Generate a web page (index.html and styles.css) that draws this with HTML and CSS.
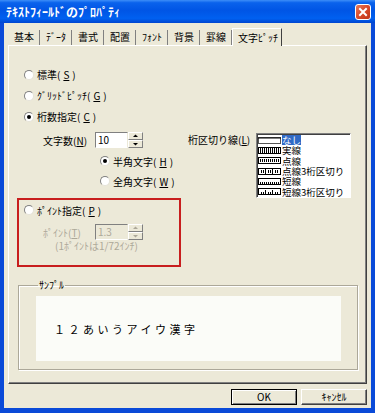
FILE: index.html
```html
<!DOCTYPE html>
<html lang="ja">
<head>
    <meta charset="UTF-8">
    <title>ﾃｷｽﾄﾌｨｰﾙﾄﾞのﾌﾟﾛﾊﾟﾃｨ</title>
    <link rel="stylesheet" href="styles.css">
</head>
<body>
    <div class="window">
        <div class="titlebar">
            <span class="title">ﾃｷｽﾄﾌｨｰﾙﾄﾞのﾌﾟﾛﾊﾟﾃｨ</span>
            <span class="close-btn">
                <svg width="14" height="14" viewBox="0 0 14 14">
                    <path d="M4 4 L10 10 M10 4 L4 10" stroke="#fff" stroke-width="2" stroke-linecap="square"></path>
                </svg>
            </span>
        </div>

        <div class="client">
            <div class="tabs">
                <div class="tab">基本</div>
                <div class="tab">ﾃﾞｰﾀ</div>
                <div class="tab">書式</div>
                <div class="tab">配置</div>
                <div class="tab">ﾌｫﾝﾄ</div>
                <div class="tab">背景</div>
                <div class="tab">罫線</div>
                <div class="tab tab-active">文字ﾋﾟｯﾁ</div>
            </div>

            <div class="panel">
                <div class="radio-row"><span class="radio"></span>標準(<u>S</u>)</div>
                <div class="radio-row"><span class="radio"></span>ｸﾞﾘｯﾄﾞﾋﾟｯﾁ(<u>G</u>)</div>
                <div class="radio-row"><span class="radio checked"></span>桁数指定(<u>C</u>)</div>

                <div class="digits">
                    <div class="digits-left">
                        <div class="field-row">
                            <span class="field-label">文字数(<u>N</u>)</span>
                            <div class="spin">
                                <span class="spin-value">10</span>
                                <span class="spin-btns">
                                    <span class="spin-btn"><svg width="13" height="6" viewBox="0 0 13 6"><polygon points="4,4 6.5,1.5 9,4" fill="#000"></polygon></svg></span>
                                    <span class="spin-btn"><svg width="13" height="6" viewBox="0 0 13 6"><polygon points="4,2 6.5,4.5 9,2" fill="#000"></polygon></svg></span>
                                </span>
                            </div>
                        </div>
                        <div class="radio-row sub-row first"><span class="radio checked"></span>半角文字(<u>H</u>)</div>
                        <div class="radio-row sub-row"><span class="radio"></span>全角文字(<u>W</u>)</div>
                    </div>
                    <div class="digits-right">
                        <span class="sep-label">桁区切り線(<u>L</u>)</span>
                        <div class="listbox">
                            <div class="list-item">
                                <svg class="line-icon" width="23" height="7" viewBox="0 0 23 7"><rect x="0.5" y="0.5" width="22" height="6" fill="#fff" stroke="#555"></rect><path d="M0 1h23" stroke="#000"></path></svg>
                                <span class="item-text selected">なし</span>
                            </div>
                            <div class="list-item">
                                <svg class="line-icon" width="23" height="7" viewBox="0 0 23 7"><rect x="0.5" y="0.5" width="22" height="6" fill="#fff" stroke="#000"></rect><path d="M2.5 1v5M4.5 1v5M6.5 1v5M8.5 1v5M10.5 1v5M12.5 1v5M14.5 1v5M16.5 1v5M18.5 1v5M20.5 1v5" stroke="#000"></path></svg>
                                <span class="item-text">実線</span>
                            </div>
                            <div class="list-item">
                                <svg class="line-icon" width="23" height="7" viewBox="0 0 23 7"><rect x="0.5" y="0.5" width="22" height="6" fill="#fff" stroke="#000"></rect><path d="M2.5 2v3M4.5 2v3M6.5 2v3M8.5 2v3M10.5 2v3M12.5 2v3M14.5 2v3M16.5 2v3M18.5 2v3M20.5 2v3" stroke="#000"></path></svg>
                                <span class="item-text">点線</span>
                            </div>
                            <div class="list-item">
                                <svg class="line-icon" width="23" height="7" viewBox="0 0 23 7"><rect x="0.5" y="0.5" width="22" height="6" fill="#fff" stroke="#000"></rect><path d="M3.5 2v3M5.5 2v3M7.5 1v5M10.5 2v3M12.5 2v3M14.5 1v5M17.5 2v3M19.5 2v3" stroke="#000"></path></svg>
                                <span class="item-text">点線3桁区切り</span>
                            </div>
                            <div class="list-item">
                                <svg class="line-icon" width="23" height="7" viewBox="0 0 23 7"><rect x="0.5" y="0.5" width="22" height="6" fill="#fff" stroke="#000"></rect><path d="M2.5 4v2M4.5 4v2M6.5 4v2M8.5 4v2M10.5 4v2M12.5 4v2M14.5 4v2M16.5 4v2M18.5 4v2M20.5 4v2" stroke="#000"></path></svg>
                                <span class="item-text">短線</span>
                            </div>
                            <div class="list-item">
                                <svg class="line-icon" width="23" height="7" viewBox="0 0 23 7"><rect x="0.5" y="0.5" width="22" height="6" fill="#fff" stroke="#000"></rect><path d="M3.5 4v2M5.5 4v2M7.5 2v4M10.5 4v2M12.5 4v2M14.5 2v4M17.5 4v2M19.5 4v2" stroke="#000"></path></svg>
                                <span class="item-text">短線3桁区切り</span>
                            </div>
                        </div>
                    </div>
                </div>

                <div class="point-box">
                    <div class="radio-row point-row"><span class="radio"></span>ﾎﾟｲﾝﾄ指定(<u>P</u>)</div>
                    <div class="field-row point-field disabled">
                        <span class="field-label">ﾎﾟｲﾝﾄ(<u>T</u>)</span>
                        <div class="spin">
                            <span class="spin-value">1.3</span>
                            <span class="spin-btns">
                                <span class="spin-btn"><svg width="13" height="6" viewBox="0 0 13 6"><polygon points="4,4 6.5,1.5 9,4" fill="#aca899"></polygon></svg></span>
                                <span class="spin-btn"><svg width="13" height="6" viewBox="0 0 13 6"><polygon points="4,2 6.5,4.5 9,2" fill="#aca899"></polygon></svg></span>
                            </span>
                        </div>
                    </div>
                    <div class="point-note">(1ﾎﾟｲﾝﾄは1/72ｲﾝﾁ)</div>
                </div>

                <fieldset class="sample">
                    <legend>ｻﾝﾌﾟﾙ</legend>
                    <div class="sample-box">１２あいうアイウ漢字</div>
                </fieldset>
            </div>

            <div class="buttons">
                <button class="btn btn-default">OK</button>
                <button class="btn">ｷｬﾝｾﾙ</button>
            </div>
        </div>
    </div>
</body>
</html>
```

FILE: styles.css
```css
* {
    margin: 0;
    padding: 0;
    box-sizing: border-box;
}

body {
    font-family: "Noto Sans CJK JP", sans-serif;
    font-size: 10px;
    color: #000;
    background-color: #ffffff;
}

.window {
    width: 375px;
    height: 413px;
    display: flex;
    flex-direction: column;
    background-color: #0a4ad8;
}

.titlebar {
    height: 23px;
    display: flex;
    align-items: center;
    justify-content: space-between;
    padding: 0 4px 0 6px;
    background: linear-gradient(to bottom, #3d8ef8 0%, #0a62ec 12%, #0055e5 45%, #0060f0 80%, #0046d0 100%);
}

.title {
    color: #ffffff;
    font-size: 12px;
    font-weight: bold;
    line-height: 14px;
}

.close-btn {
    width: 16px;
    height: 16px;
    display: flex;
    align-items: center;
    justify-content: center;
    border: 1px solid #ffffff;
    border-radius: 3px;
    background: linear-gradient(to bottom right, #e87a5a 0%, #d8492a 50%, #c03518 100%);
}

.client {
    flex: 1;
    margin: 0 4px 5px;
    padding: 0 4px;
    background-color: #ece9d8;
    display: flex;
    flex-direction: column;
}

/* tab strip */
.tabs {
    height: 22px;
    display: flex;
    align-items: flex-end;
}

.tab {
    height: 15px;
    padding: 0 5px 0 6px;
    line-height: 13px;
    border-right: 1px solid #808080;
    white-space: nowrap;
}

.tab-active {
    height: 18px;
    padding: 2px 3px 0 5px;
    margin-bottom: -1px;
    position: relative;
    background-color: #ece9d8;
    border-top: 1px solid #ffffff;
    border-left: 1px solid #ffffff;
    border-right: 1px solid #404040;
}

.panel {
    height: 339px;
    padding: 18px 0 0 8px;
    border: 1px solid;
    border-color: #ffffff #404040 #404040 #ffffff;
    box-shadow: inset -1px -1px 0 #808080;
}

/* radios */
.radio-row {
    height: 21px;
    display: flex;
    align-items: center;
    gap: 3px;
    padding-left: 7px;
    white-space: nowrap;
}

.radio {
    width: 10px;
    height: 10px;
    border-radius: 50%;
    background-color: #ffffff;
    border: 1px solid;
    border-color: #808080 #e4e2d8 #e4e2d8 #808080;
    display: flex;
    align-items: center;
    justify-content: center;
}

.radio.checked::after {
    content: "";
    width: 4px;
    height: 4px;
    border-radius: 50%;
    background-color: #000;
}

.digits {
    display: flex;
    margin-top: 5px;
}

.digits-left {
    width: 171px;
}

.field-row {
    height: 16px;
    display: flex;
    align-items: center;
    padding-left: 26px;
}

.field-label {
    width: 52px;
    white-space: nowrap;
}

.spin {
    display: flex;
    height: 16px;
}

.spin-value {
    width: 33px;
    height: 16px;
    line-height: 14px;
    padding-left: 2px;
    background-color: #ffffff;
    border: 1px solid;
    border-color: #808080 #ece9d8 #ffffff #808080;
}

.spin-btns {
    width: 15px;
    display: flex;
    flex-direction: column;
}

.spin-btn {
    height: 8px;
    display: flex;
    align-items: center;
    justify-content: center;
    background-color: #ece9d8;
    border: 1px solid;
    border-color: #ffffff #808080 #808080 #ffffff;
}

.sub-row {
    height: 20px;
    padding-left: 83px;
}

.sub-row.first {
    margin-top: 3px;
}

.digits-right {
    display: flex;
    align-items: flex-start;
}

.sep-label {
    width: 68px;
    line-height: 16px;
    white-space: nowrap;
}

.listbox {
    width: 95px;
    height: 65px;
    margin-top: 1px;
    padding-top: 1px;
    background-color: #ffffff;
    border: 1px solid;
    border-color: #808080 #ffffff #ffffff #808080;
    box-shadow: inset 1px 1px 0 #404040;
}

.list-item {
    height: 10.3px;
    display: flex;
    align-items: center;
    gap: 1px;
    padding-left: 1px;
    font-size: 9.5px;
    line-height: 10px;
    white-space: nowrap;
}

.line-icon {
    flex-shrink: 0;
}

.item-text.selected {
    background-color: #316ac5;
    color: #ffffff;
}

/* point group highlighted in red */
.point-box {
    width: 164px;
    height: 69px;
    border: 2px solid #c81e1e;
}

.point-row {
    height: 20px;
    padding-left: 5px;
}

.point-field {
    margin-top: 4px;
    padding-left: 24px;
}

.disabled {
    color: #aca899;
}

.disabled .spin-value {
    background-color: #ece9d8;
}

.point-note {
    color: #aca899;
    line-height: 12px;
    padding-left: 36px;
    white-space: nowrap;
}

/* sample group */
.sample {
    width: 340px;
    height: 91px;
    margin: 12px 0 0 1px;
    padding: 0 16px 7px 17px;
    border: 1px solid #aca899;
    box-shadow: inset 1px 1px 0 #ffffff, 1px 1px 0 #ffffff;
}

.sample legend {
    margin-left: 2px;
    padding: 0 1px;
    line-height: 12px;
}

.sample-box {
    height: 65px;
    margin-top: 5px;
    padding-left: 18px;
    display: flex;
    align-items: center;
    background-color: #fbfcf8;
    font-size: 11px;
    letter-spacing: 3.5px;
}

/* dialog buttons */
.buttons {
    display: flex;
    justify-content: flex-end;
    gap: 4px;
    margin-top: 5px;
}

.btn {
    width: 66px;
    height: 16px;
    font-family: inherit;
    font-size: 10px;
    line-height: 12px;
    background-color: #ece9d8;
    border: 1px solid;
    border-color: #ffffff #404040 #404040 #ffffff;
    box-shadow: inset -1px -1px 0 #808080;
}

.btn-default {
    border-color: #000;
    box-shadow: inset 1px 1px 0 #ffffff, inset -1px -1px 0 #808080;
}
```
